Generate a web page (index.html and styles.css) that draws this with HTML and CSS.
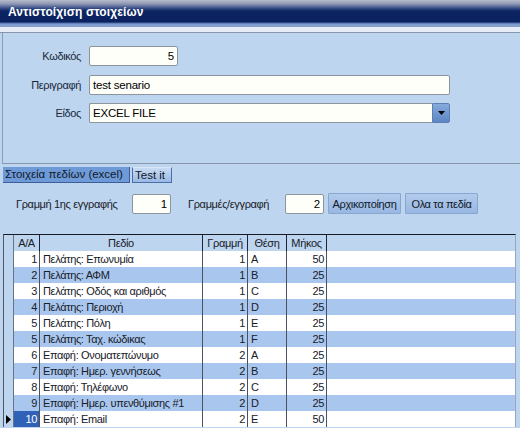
FILE: index.html
```html
<!DOCTYPE html>
<html>
<head>
<meta charset="utf-8">
<link rel="stylesheet" href="styles.css">
</head>
<body>
<div class="app">
  <div class="titlebar"><span class="title">Αντιστοίχιση στοιχείων</span></div>
  <div class="strip"></div>
  <div class="panel">
    <div class="form">
      <label class="flabel">Κωδικός</label>
      <div class="field short num">5</div>
      <label class="flabel">Περιγραφή</label>
      <div class="field long">test senario</div>
      <label class="flabel">Είδος</label>
      <div class="combo">
        <div class="combo-text">EXCEL FILE</div>
        <div class="combo-btn"><svg width="7" height="4" viewBox="0 0 7 4"><path d="M0 0H7L3.5 4Z" fill="#000"/></svg></div>
      </div>
    </div>
  </div>
  <div class="tabs">
    <div class="tab active">Στοιχεία πεδίων (excel)</div>
    <div class="tab">Test it</div>
  </div>
  <div class="params">
    <span class="plabel1">Γραμμή 1ης εγγραφής</span>
    <div class="field tiny num">1</div>
    <span class="plabel2">Γραμμές/εγγραφή</span>
    <div class="field tiny num">2</div>
    <button class="btn">Αρχικοποίηση</button>
    <button class="btn">Ολα τα πεδία</button>
  </div>
  <div class="grid">
    <div class="row head">
      <div class="c ind"></div>
      <div class="c hc">A/A</div>
      <div class="c hc">Πεδίο</div>
      <div class="c hc">Γραμμή</div>
      <div class="c hc">Θέση</div>
      <div class="c hc">Μήκος</div>
      <div class="c fill"></div>
    </div>
    <div class="row"><div class="c ind"></div><div class="c n">1</div><div class="c t">Πελάτης: Επωνυμία</div><div class="c n">1</div><div class="c t">A</div><div class="c n">50</div><div class="c fill"></div></div>
    <div class="row alt"><div class="c ind"></div><div class="c n">2</div><div class="c t">Πελάτης: ΑΦΜ</div><div class="c n">1</div><div class="c t">B</div><div class="c n">25</div><div class="c fill"></div></div>
    <div class="row"><div class="c ind"></div><div class="c n">3</div><div class="c t">Πελάτης: Οδός και αριθμός</div><div class="c n">1</div><div class="c t">C</div><div class="c n">25</div><div class="c fill"></div></div>
    <div class="row alt"><div class="c ind"></div><div class="c n">4</div><div class="c t">Πελάτης: Περιοχή</div><div class="c n">1</div><div class="c t">D</div><div class="c n">25</div><div class="c fill"></div></div>
    <div class="row"><div class="c ind"></div><div class="c n">5</div><div class="c t">Πελάτης: Πόλη</div><div class="c n">1</div><div class="c t">E</div><div class="c n">25</div><div class="c fill"></div></div>
    <div class="row alt"><div class="c ind"></div><div class="c n">5</div><div class="c t">Πελάτης: Ταχ. κώδικας</div><div class="c n">1</div><div class="c t">F</div><div class="c n">25</div><div class="c fill"></div></div>
    <div class="row"><div class="c ind"></div><div class="c n">6</div><div class="c t">Επαφή: Ονοματεπώνυμο</div><div class="c n">2</div><div class="c t">A</div><div class="c n">25</div><div class="c fill"></div></div>
    <div class="row alt"><div class="c ind"></div><div class="c n">7</div><div class="c t">Επαφή: Ημερ. γεννήσεως</div><div class="c n">2</div><div class="c t">B</div><div class="c n">25</div><div class="c fill"></div></div>
    <div class="row"><div class="c ind"></div><div class="c n">8</div><div class="c t">Επαφή: Τηλέφωνο</div><div class="c n">2</div><div class="c t">C</div><div class="c n">25</div><div class="c fill"></div></div>
    <div class="row alt"><div class="c ind"></div><div class="c n">9</div><div class="c t">Επαφή: Ημερ. υπενθύμισης #1</div><div class="c n">2</div><div class="c t">D</div><div class="c n">25</div><div class="c fill"></div></div>
    <div class="row"><div class="c ind"><svg class="arrow" width="5" height="9" viewBox="0 0 5 9"><path d="M0 0L5 4.5L0 9Z" fill="#000"/></svg></div><div class="c n sel">10</div><div class="c t">Επαφή: Email</div><div class="c n">2</div><div class="c t">E</div><div class="c n">50</div><div class="c fill"></div></div>
  </div>
</div>
</body>
</html>
```

FILE: styles.css
```css
* { box-sizing: border-box; }
html, body { margin: 0; padding: 0; }
body {
  font-family: "Liberation Sans", Arial, sans-serif;
  font-size: 11px;
  letter-spacing: -0.35px;
  color: #182028;
  background: #bed5ef;
}
.app {
  width: 520px;
  height: 428px;
  overflow: hidden;
  background: #bed5ef;
}
.titlebar {
  height: 27px;
  background: linear-gradient(#b6bccb 0, #8e97b4 4px, #3a5088 8px, #0c2462 11px, #0a2260 22px, #4c6aa6 23px, #7c9acb 24px, #86a2d0 27px);
  padding: 5px 0 0 8px;
}
.title {
  color: #fff;
  font-weight: bold;
  font-size: 12px;
  letter-spacing: 0.1px;
}
.strip {
  height: 6px;
  background: #e6edf6;
  border-bottom: 1px solid #8896ac;
}
.panel {
  margin-left: 2px;
  height: 131px;
  border-left: 1px solid #8e9cb2;
  border-bottom: 1px solid #8896ac;
  padding-top: 13px;
}
.form {
  display: grid;
  grid-template-columns: 78px auto;
  column-gap: 8px;
  row-gap: 8.5px;
  align-items: center;
  justify-items: start;
}
.flabel {
  justify-self: end;
  font-size: 11px;
  color: #182838;
}
.field {
  height: 20px;
  background: #fffffa;
  border: 1px solid #8c949c;
  border-radius: 2px;
  padding: 0 3px;
  line-height: 18px;
  font-size: 11.5px;
  letter-spacing: -0.2px;
  color: #000;
}
.num { text-align: right; }
.short { width: 89px; }
.long { width: 361px; }
.tiny { width: 39px; }
.combo {
  display: flex;
  width: 361px;
  height: 20px;
}
.combo-text {
  flex: 1;
  background: #fffffa;
  border: 1px solid #8c949c;
  border-right: none;
  border-radius: 2px 0 0 2px;
  padding: 0 3px;
  line-height: 18px;
  font-size: 11.5px;
  letter-spacing: -0.2px;
  color: #000;
}
.combo-btn {
  width: 18px;
  background: linear-gradient(#86aadc, #5c86c4);
  border: 1px solid #5f7fb0;
  border-radius: 0 2px 2px 0;
  display: flex;
  align-items: center;
  justify-content: center;
}
.tabs {
  display: flex;
  gap: 2px;
  margin: 3px 0 0 3px;
  height: 16px;
}
.tab {
  height: 16px;
  line-height: 15px;
  padding: 0 2px;
  font-size: 11.5px;
  letter-spacing: 0;
  color: #101828;
  white-space: nowrap;
}
.tab.active {
  width: 127px;
  background: #6e9ad8;
  border-right: 1px solid #3d5e98;
  border-bottom: 1px solid #3d5e98;
}
.tab:not(.active) {
  width: 40px;
  background: linear-gradient(#c8dbf3, #9ab9e4);
  border: 1px solid #4a6ea8;
  border-top-color: #d8e6f6;
}
.params {
  display: flex;
  align-items: center;
  margin-top: 10px;
  height: 21px;
  padding-left: 16px;
}
.plabel1 { width: 116px; }
.plabel2 { width: 97px; margin-left: 17px; }
.btn {
  height: 21px;
  width: 73px;
  margin-left: 4px;
  padding: 0;
  font-family: inherit;
  font-size: 11px;
  letter-spacing: -0.35px;
  color: #101828;
  background: linear-gradient(#b2cbec, #98b7e2);
  border: 1px solid #8aa6d0;
  border-radius: 1px;
}
.grid {
  margin: 20px 0 0 3px;
  width: 513px;
  border-top: 1px solid #141a26;
  border-left: 1px solid #4e5666;
  border-right: 1px solid #96a8c0;
}
.row {
  display: grid;
  grid-template-columns: 10px 26px 163px 45px 39px 40px 1fr;
  height: 16px;
  background: #ffffff;
}
.row.alt { background: #a9c7ee; }
.row.head { background: #bed5ef; }
.c {
  height: 16px;
  line-height: 16px;
  border-right: 1px solid #4a5262;
  white-space: nowrap;
  overflow: hidden;
  font-size: 11px;
  color: #182028;
}
.head .c { border-right-color: #1e2532; }
.hc { text-align: center; }
.c.fill { border-right: none; }
.c.ind {
  background: #bed5ef;
  border-right-color: #6a7486;
  position: relative;
}
.n { text-align: right; padding-right: 2px; }
.t { padding-left: 3px; }
.sel { background: #2f62b6; color: #fff; }
.arrow { position: absolute; left: 2px; top: 4px; }
```
